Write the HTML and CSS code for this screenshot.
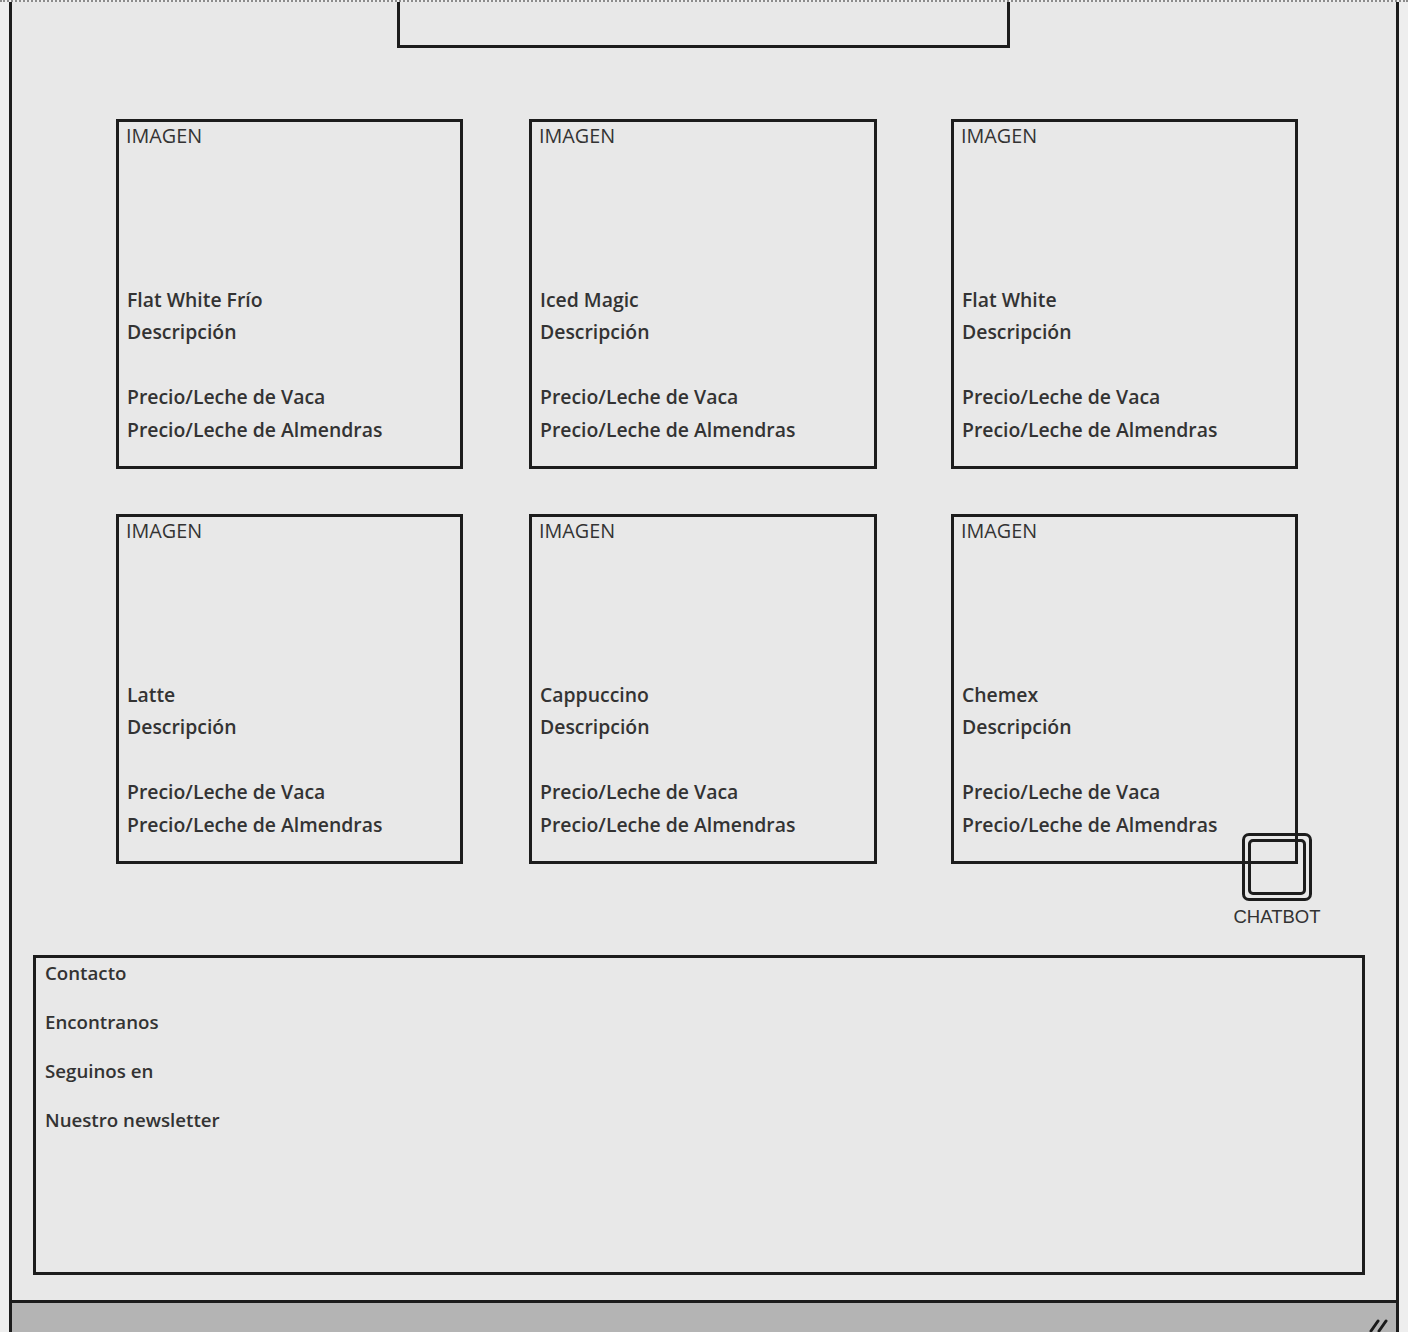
FILE: index.html
```html
<!DOCTYPE html>
<html lang="es">
<head>
<meta charset="utf-8">
<title>Menú</title>
<link rel="stylesheet" href="styles.css">
</head>
<body>
<div class="frame">
  <div class="top-box"></div>

  <div class="cards">
    <div class="card">
      <div class="img-label">IMAGEN</div>
      <div class="info">
        <div class="line">Flat White Frío</div>
        <div class="line">Descripción</div>
        <div class="line"></div>
        <div class="line">Precio/Leche de Vaca</div>
        <div class="line">Precio/Leche de Almendras</div>
      </div>
    </div>
    <div class="card">
      <div class="img-label">IMAGEN</div>
      <div class="info">
        <div class="line">Iced Magic</div>
        <div class="line">Descripción</div>
        <div class="line"></div>
        <div class="line">Precio/Leche de Vaca</div>
        <div class="line">Precio/Leche de Almendras</div>
      </div>
    </div>
    <div class="card">
      <div class="img-label">IMAGEN</div>
      <div class="info">
        <div class="line">Flat White</div>
        <div class="line">Descripción</div>
        <div class="line"></div>
        <div class="line">Precio/Leche de Vaca</div>
        <div class="line">Precio/Leche de Almendras</div>
      </div>
    </div>
    <div class="card">
      <div class="img-label">IMAGEN</div>
      <div class="info">
        <div class="line">Latte</div>
        <div class="line">Descripción</div>
        <div class="line"></div>
        <div class="line">Precio/Leche de Vaca</div>
        <div class="line">Precio/Leche de Almendras</div>
      </div>
    </div>
    <div class="card">
      <div class="img-label">IMAGEN</div>
      <div class="info">
        <div class="line">Cappuccino</div>
        <div class="line">Descripción</div>
        <div class="line"></div>
        <div class="line">Precio/Leche de Vaca</div>
        <div class="line">Precio/Leche de Almendras</div>
      </div>
    </div>
    <div class="card">
      <div class="img-label">IMAGEN</div>
      <div class="info">
        <div class="line">Chemex</div>
        <div class="line">Descripción</div>
        <div class="line"></div>
        <div class="line">Precio/Leche de Vaca</div>
        <div class="line">Precio/Leche de Almendras</div>
      </div>
    </div>
  </div>

  <div class="chatbot">
    <div class="chat-btn"><div class="chat-inner"></div></div>
    <div class="chat-label">CHATBOT</div>
  </div>

  <div class="footer">
    <p class="foot-item">Contacto</p>
    <p class="foot-item">Encontranos</p>
    <p class="foot-item">Seguinos en</p>
    <p class="foot-item">Nuestro newsletter</p>
  </div>

  <div class="bottom-bar">
    <svg class="grip" width="24" height="18" viewBox="0 0 24 18">
      <path d="M4 17 L11 7" stroke="#1a1a1a" stroke-width="3" stroke-linecap="round"/>
      <path d="M12 17 L19 7" stroke="#1a1a1a" stroke-width="3" stroke-linecap="round"/>
    </svg>
  </div>
</div>
</body>
</html>
```

FILE: styles.css
```css
html, body {
  margin: 0;
  padding: 0;
}
body {
  background: #eeeeee;
  border-top: 2px dotted #8c8c8c;
  font-family: "Open Sans", "Noto Sans", sans-serif;
  color: #2e2e2e;
  height: 1330px;
  overflow: hidden;
}
.frame {
  position: relative;
  margin: 0 9px;
  height: 1330px;
  box-sizing: border-box;
  border-left: 3px solid #1c1c1c;
  border-right: 3px solid #1c1c1c;
  background: #e8e8e8;
  display: flex;
  flex-direction: column;
}
.top-box {
  margin-left: 385px;
  width: 613px;
  height: 46px;
  box-sizing: border-box;
  border: 3px solid #1c1c1c;
  border-top: none;
  flex: none;
}
.cards {
  margin-top: 71px;
  margin-left: 104px;
  display: grid;
  grid-template-columns: 347px 348px 347px;
  column-gap: 70px;
  row-gap: 45px;
  flex: none;
}
.card {
  height: 350px;
  box-sizing: border-box;
  border: 3px solid #1c1c1c;
  padding: 0 8px 20px 8px;
  display: flex;
  flex-direction: column;
  justify-content: space-between;
  font-size: 19.4px;
  font-weight: 600;
  color: #333;
}
.card:nth-child(3n+2) {
  margin-left: -4px;
  width: 348px;
}
.img-label {
  line-height: 28px;
  margin-left: -1px;
  font-weight: 500;
  font-size: 19.8px;
}
.line {
  height: 32.5px;
  line-height: 32.5px;
  white-space: nowrap;
}
.chatbot {
  position: absolute;
  left: 1219px;
  top: 831px;
  width: 92px;
  display: flex;
  flex-direction: column;
  align-items: center;
}
.chat-btn {
  width: 70px;
  height: 68px;
  box-sizing: border-box;
  border: 3px solid #1c1c1c;
  border-radius: 7px;
  padding: 3px;
}
.chat-inner {
  width: 100%;
  height: 100%;
  box-sizing: border-box;
  border: 3px solid #1c1c1c;
  border-radius: 5px;
}
.chat-label {
  font-family: "Liberation Sans", Arial, sans-serif;
  font-size: 18.5px;
  line-height: 22px;
  margin-top: 5px;
  color: #333;
}
.footer {
  margin-top: 91px;
  margin-left: 21px;
  width: 1332px;
  height: 320px;
  box-sizing: border-box;
  border: 3px solid #1c1c1c;
  padding: 4px 9px;
  display: flex;
  flex-direction: column;
  gap: 27px;
  flex: none;
}
.foot-item {
  margin: 0;
  font-size: 18.7px;
  font-weight: 600;
  line-height: 22px;
  color: #333;
}
.bottom-bar {
  margin-top: 25px;
  flex: 1;
  background: #b4b4b4;
  border-top: 3px solid #1c1c1c;
  display: flex;
  justify-content: flex-end;
  align-items: flex-end;
  padding-right: 5px;
}
.grip {
  display: block;
}
```
